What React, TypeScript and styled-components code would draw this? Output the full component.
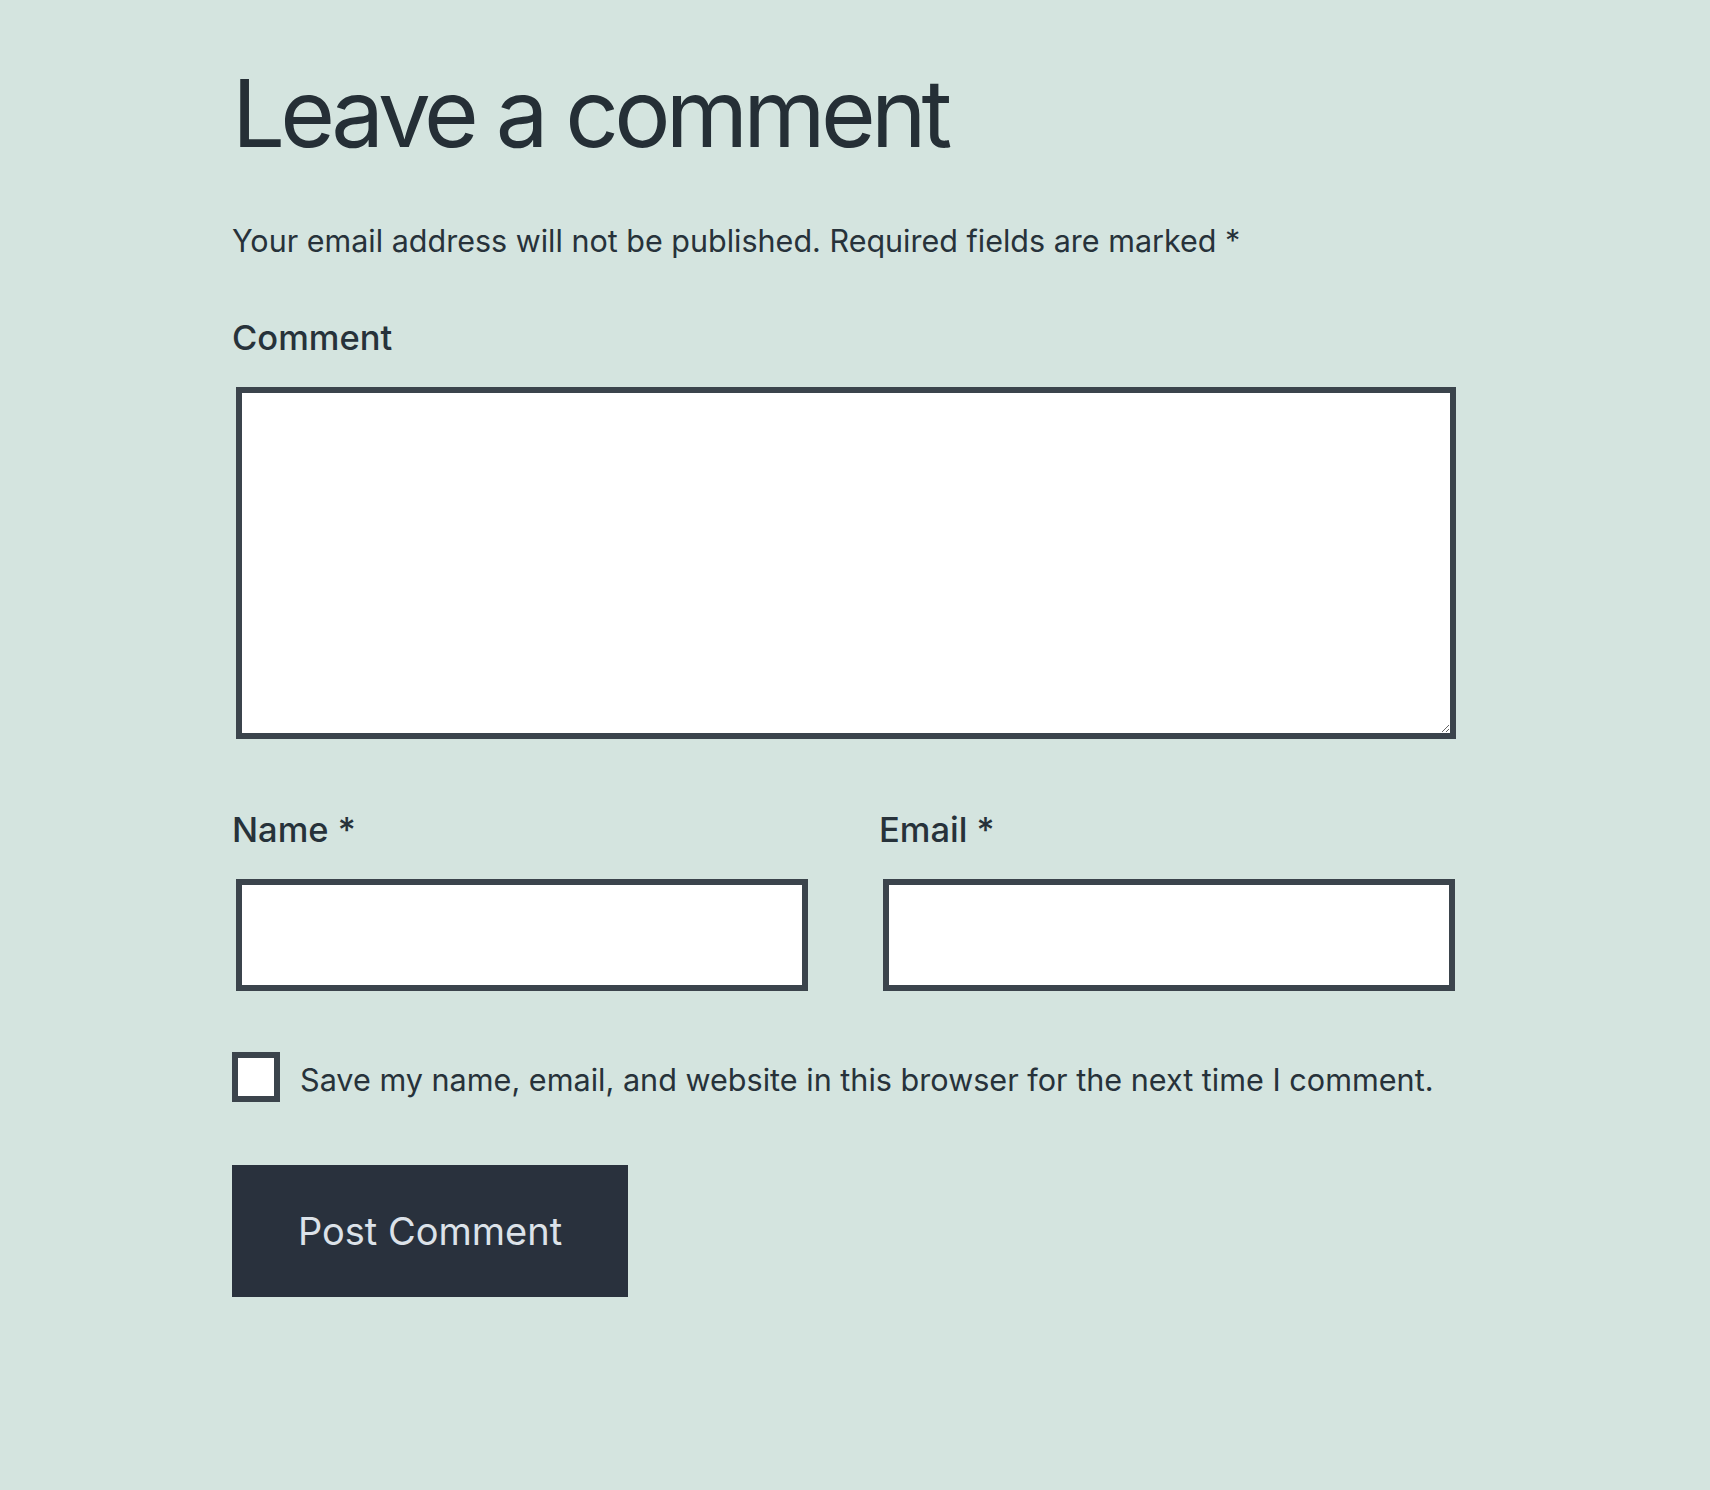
import React from "react";
import styled, { createGlobalStyle } from "styled-components";

const Global = createGlobalStyle`
  html, body {
    margin: 0;
    padding: 0;
    background: #d4e4df;
  }
  body {
    font-family: Inter, "Noto Sans", "Liberation Sans", sans-serif;
    color: #27323a;
  }
  * { box-sizing: border-box; }
`;

const Page = styled.div`
  min-height: 1490px;
  background: #d4e4df;
  padding: 57px 250px 0 232px;
`;

const Form = styled.form`
  width: 1228px;
  display: flex;
  flex-direction: column;
`;

const Title = styled.h2`
  margin: 0;
  font-size: 94px;
  line-height: 1.2;
  font-weight: 400;
  letter-spacing: -4.8px;
  color: #252f36;
`;

const Notes = styled.p`
  margin: 51px 0 0;
  font-size: 30.5px;
  line-height: 40.6px;
  font-weight: 400;
`;

const Field = styled.div<{ $top: number }>`
  margin-top: ${(p) => p.$top}px;
  display: flex;
  flex-direction: column;
`;

const Label = styled.label`
  font-size: 34.5px;
  line-height: 45px;
  font-weight: 500;
  margin-bottom: 27px;
`;

const TextArea = styled.textarea`
  margin: 0 4px;
  height: 352px;
  border: 6px solid #3b444c;
  border-radius: 0;
  background: #fff;
  resize: vertical;
  font: inherit;
  outline: none;
`;

const Row = styled.div`
  margin-top: 68px;
  display: grid;
  grid-template-columns: 580px 580px;
  column-gap: 67px;
`;

const Input = styled.input`
  margin: 0 4px;
  height: 112px;
  border: 6px solid #3b444c;
  border-radius: 0;
  background: #fff;
  font: inherit;
  outline: none;
`;

const CheckRow = styled.div`
  margin-top: 61px;
  display: flex;
  align-items: center;
  gap: 20px;
`;

const Box = styled.span`
  width: 48px;
  height: 50px;
  border: 6px solid #3b444c;
  background: #fff;
  flex: none;
`;

const CheckText = styled.span`
  font-size: 30.6px;
  line-height: 40.6px;
  padding-top: 5px;
`;

const Actions = styled.div`
  margin-top: 63px;
  display: flex;
`;

const Button = styled.button`
  width: 396px;
  height: 132px;
  border: none;
  border-radius: 0;
  background: #29313d;
  color: #dce2e9;
  font-family: Inter, "Noto Sans", "Liberation Sans", sans-serif;
  font-size: 38px;
  font-weight: 400;
  cursor: pointer;
`;

export default function App() {
  return (
    <Page>
      <Global />
      <Form onSubmit={(e) => e.preventDefault()}>
        <Title>Leave a comment</Title>
        <Notes>Your email address will not be published. Required fields are marked *</Notes>
        <Field $top={54}>
          <Label htmlFor="comment">Comment</Label>
          <TextArea id="comment" />
        </Field>
        <Row>
          <Field $top={0}>
            <Label htmlFor="name">Name *</Label>
            <Input id="name" type="text" />
          </Field>
          <Field $top={0}>
            <Label htmlFor="email">Email *</Label>
            <Input id="email" type="email" />
          </Field>
        </Row>
        <CheckRow>
          <Box role="checkbox" aria-checked="false" />
          <CheckText>Save my name, email, and website in this browser for the next time I comment.</CheckText>
        </CheckRow>
        <Actions>
          <Button type="submit">Post Comment</Button>
        </Actions>
      </Form>
    </Page>
  );
}
